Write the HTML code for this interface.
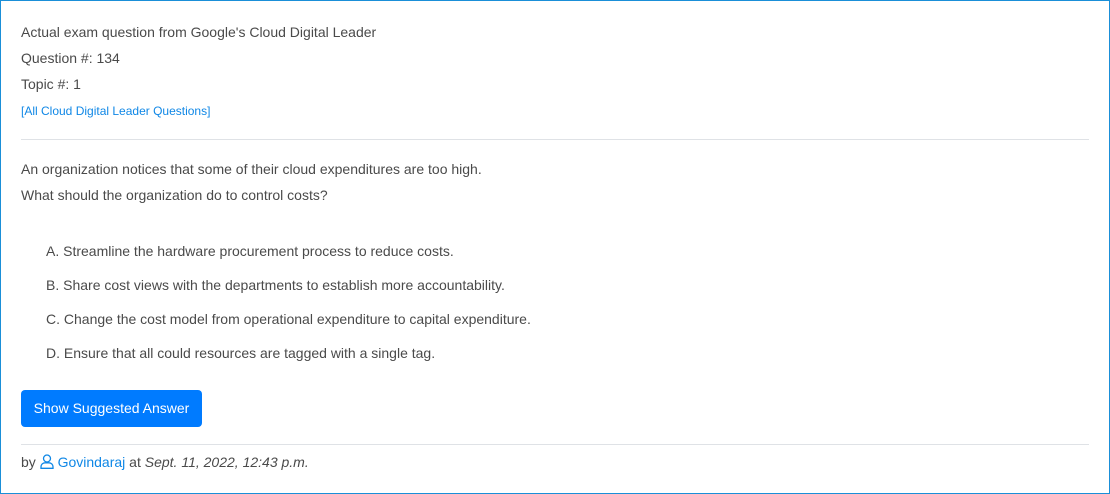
<!DOCTYPE html>
<html><head><style>
*{margin:0;padding:0;box-sizing:border-box}
html,body{width:1110px;height:494px;background:#fff;overflow:hidden}
body{font-family:"Liberation Sans",sans-serif;color:#4a4a4a;font-size:14px;}
.frame{position:absolute;left:0;top:0;width:1110px;height:494px;border:1px solid #1a8fd8;}
.t{position:absolute;left:21px;white-space:nowrap;line-height:18px}
a{color:#0f87e6;text-decoration:none}
.hr{position:absolute;left:21px;width:1068px;height:1px;background:#dfe2e6}
.btn{position:absolute;left:21px;top:390px;width:181px;height:37px;background:#007bff;border-radius:4px;color:#fff;font-size:14px;line-height:37px;text-align:center}
</style></head><body>
<div class="frame"></div>
<div class="t" style="top:23px">Actual exam question from Google's Cloud Digital Leader</div>
<div class="t" style="top:49px">Question #: 134</div>
<div class="t" style="top:75px">Topic #: 1</div>
<div class="t" style="top:102px;font-size:12px"><a>[All Cloud Digital Leader Questions]</a></div>
<div class="hr" style="top:139px"></div>
<div class="t" style="top:160px">An organization notices that some of their cloud expenditures are too high.</div>
<div class="t" style="top:186px">What should the organization do to control costs?</div>
<div class="t" style="top:242px;left:46px">A. Streamline the hardware procurement process to reduce costs.</div>
<div class="t" style="top:276px;left:46px">B. Share cost views with the departments to establish more accountability.</div>
<div class="t" style="top:310px;left:46px">C. Change the cost model from operational expenditure to capital expenditure.</div>
<div class="t" style="top:344px;left:46px">D. Ensure that all could resources are tagged with a single tag.</div>
<div class="btn">Show Suggested Answer</div>
<div class="hr" style="top:444px"></div>
<div class="t" style="top:453px">by <a><svg width="14" height="15" viewBox="0 0 14 15" style="vertical-align:-2px"><circle cx="7" cy="4.5" r="3.5" fill="none" stroke="#0f87e6" stroke-width="1.3"/><path d="M1 14.3v-1.5a4 4 0 0 1 4-4h4a4 4 0 0 1 4 4v1.5z" fill="none" stroke="#0f87e6" stroke-width="1.3"/></svg> Govindaraj</a> at <i>Sept. 11, 2022, 12:43 p.m.</i></div>
</body></html>
